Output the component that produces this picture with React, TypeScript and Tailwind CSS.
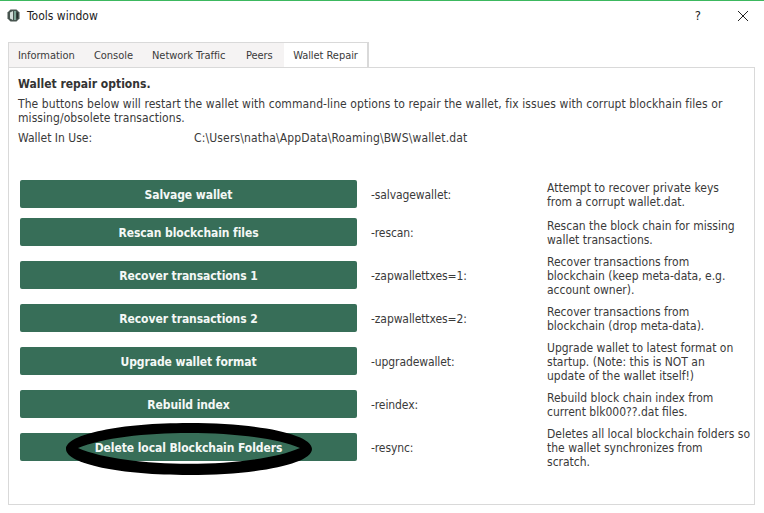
const rows = [
  { label: 'Salvage wallet', opt: '-salvagewallet:', desc: ['Attempt to recover private keys', 'from a corrupt wallet.dat.'], mt: 'mt-0' },
  { label: 'Rescan blockchain files', opt: '-rescan:', desc: ['Rescan the block chain for missing', 'wallet transactions.'], mt: 'mt-[10px]' },
  { label: 'Recover transactions 1', opt: '-zapwallettxes=1:', desc: ['Recover transactions from', 'blockchain (keep meta-data, e.g.', 'account owner).'], mt: 'mt-[15px]' },
  { label: 'Recover transactions 2', opt: '-zapwallettxes=2:', desc: ['Recover transactions from', 'blockchain (drop meta-data).'], mt: 'mt-[15px]' },
  { label: 'Upgrade wallet format', opt: '-upgradewallet:', desc: ['Upgrade wallet to latest format on', 'startup. (Note: this is NOT an', 'update of the wallet itself!)'], mt: 'mt-[15px]' },
  { label: 'Rebuild index', opt: '-reindex:', desc: ['Rebuild block chain index from', 'current blk000??.dat files.'], mt: 'mt-[15px]' },
  { label: 'Delete local Blockchain Folders', opt: '-resync:', desc: ['Deletes all local blockchain folders so', 'the wallet synchronizes from', 'scratch.'], mt: 'mt-[15px]' },
]

const tabs = [
  { name: 'Information', w: 'w-[76px]' },
  { name: 'Console', w: 'w-[58px]' },
  { name: 'Network Traffic', w: 'w-[94px]' },
  { name: 'Peers', w: 'w-[47px]' },
]

export default function App() {
  return (
    <div className="w-[764px] h-[513px] bg-white overflow-hidden border-t border-[#3cb85f] font-['DejaVu_Sans',sans-serif] text-[11px] leading-[14px] text-[#3a3a3a] [font-stretch:condensed]">
      {/* Title bar */}
      <div className="flex items-center h-[29px] pl-[7px] pr-[15px]">
        <svg width="13" height="13" viewBox="0 0 13 13" className="mr-[7px]">
          <path d="M3.5 .5h6l3 3v6l-3 3h-6l-3-3v-6z" fill="#47544f" />
          <path d="M3 3.5l3-1.5v9l-3-1.500z" fill="#d5dfda" />
          <path d="M7 2h2v9h-2z" fill="#7fa596" />
          <path d="M9.500 3.500h1.500v6h-1.500z" fill="#222e2a" />
        </svg>
        <span className="text-[12px] text-[#222]">Tools window</span>
        <span className="ml-auto mr-[36px] text-[13px] text-[#222]">?</span>
        <svg width="12" height="12" viewBox="0 0 12 12" stroke="#222" strokeWidth="1">
          <path d="M1 1l10 10M11 1L1 11" />
        </svg>
      </div>

      {/* Tabs */}
      <div className="flex ml-[8px] mt-[12px] h-[25px] w-[361px] border border-b-0 border-[#d9d9d9] bg-[#f5f3f3] tracking-[-0.05px]">
        {tabs.map((t) => (
          <div key={t.name} className={`flex items-center pl-[9px] pt-[1px] ${t.w}`}>{t.name}</div>
        ))}
        <div className="flex flex-1 items-center justify-center pt-[1px] bg-white border-r border-[#d9d9d9]">Wallet Repair</div>
      </div>

      {/* Pane */}
      <div className="relative ml-[8px] w-[747px] h-[438px] border border-[#d9d9d9] pl-[9px] pt-[9px]">
        <div className="font-bold text-[12px] text-[#333]">Wallet repair options.</div>
        <div className="mt-[6px] text-[12px] tracking-[0.07px]">
          <div>The buttons below will restart the wallet with command-line options to repair the wallet, fix issues with corrupt blockhain files or</div>
          <div>missing/obsolete transactions.</div>
        </div>
        <div className="flex mt-[6px] text-[12px]">
          <div className="w-[176px]">Wallet In Use:</div>
          <div className="tracking-[0.15px]">C:\Users\natha\AppData\Roaming\BWS\wallet.dat</div>
        </div>

        <div className="mt-[35px] ml-[2px] flex flex-col">
          {rows.map((r) => (
            <div key={r.label} className={`flex items-center h-[28px] ${r.mt}`}>
              <button className="w-[337px] h-[28px] shrink-0 pt-[2px] rounded-[2px] bg-[#376e58] text-[#f4f8f6] font-bold text-[12px] tracking-[-0.08px]">{r.label}</button>
              <div className="w-[190px] pl-[14px] pt-[2px] shrink-0 text-[12px] tracking-[-0.1px]">{r.opt}</div>
              <div className="whitespace-nowrap pt-[2px] text-[12px]">
                {r.desc.map((d) => (
                  <div key={d}>{d}</div>
                ))}
              </div>
            </div>
          ))}
        </div>

        {/* Hand-drawn ellipse over the last button */}
        <svg width="246" height="52" viewBox="0 0 246 52" className="absolute left-[57px] top-[355px]">
          <path
            fillRule="evenodd"
            d="M0 26C0 11 55 0 123 0s123 11 123 26-55 26-123 26S0 41 0 26ZM12 25C60 5 186 5 234 25C186 46 60 46 12 25Z"
            fill="#000"
          />
        </svg>
      </div>
    </div>
  )
}
